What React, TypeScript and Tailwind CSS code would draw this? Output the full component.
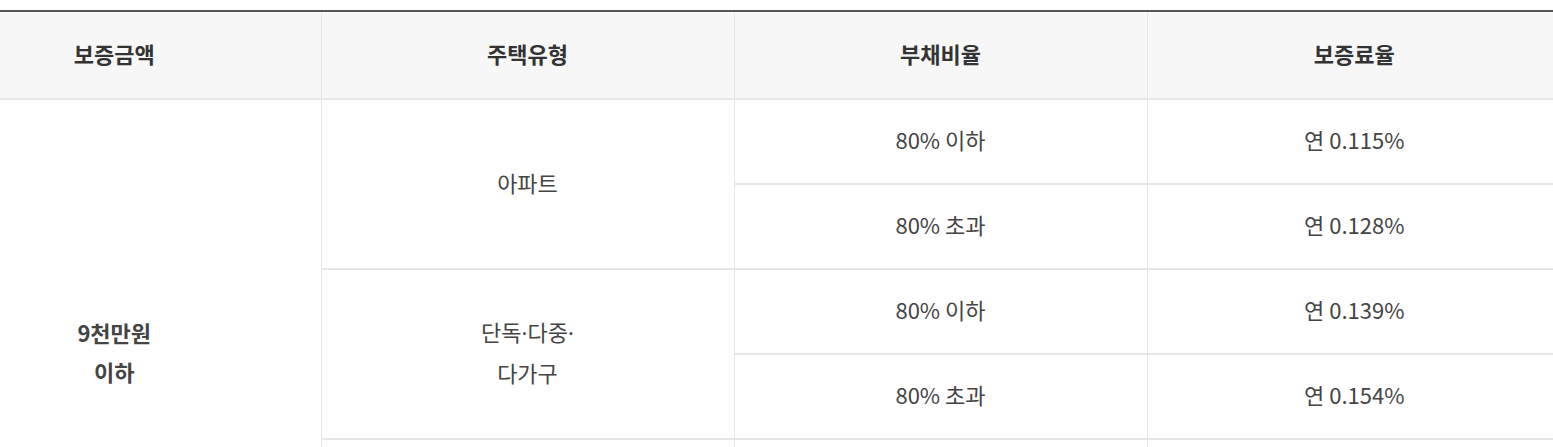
const rows = [
  { type: ["아파트"], ratio: "80% 이하", rate: "연 0.115%" },
  { ratio: "80% 초과", rate: "연 0.128%" },
  { type: ["단독", "다중", ""], type2: "다가구", ratio: "80% 이하", rate: "연 0.139%" },
  { ratio: "80% 초과", rate: "연 0.154%" },
  { type: ["연립", "다세대"], ratio: "80% 이하", rate: "연 0.128%" },
  { ratio: "80% 초과", rate: "연 0.142%" },
];

const cell = "border-l border-b-2 border-[#e6e6e6] pb-[5px] text-center align-middle";
const dot = <span className="font-['Noto_Sans',sans-serif]">·</span>;

export default function App() {
  return (
    <div className="w-[1553px] overflow-hidden bg-white pt-[10px] font-['Noto_Sans_CJK_KR',sans-serif]">
      <table className="ml-[-92px] w-[1653px] table-fixed border-collapse border-t-2 border-t-[#555]">
        <colgroup>
          <col className="w-[413px]" />
          <col className="w-[413px]" />
          <col className="w-[413px]" />
          <col className="w-[414px]" />
        </colgroup>
        <thead>
          <tr className="h-[88px] bg-[#f7f7f7] text-[22px] font-bold text-[#333]">
            <th className="border-b-2 border-[#e6e6e6] pb-[3px]">보증금액</th>
            <th className={cell.replace("pb-[5px]", "pb-[3px]")}>주택유형</th>
            <th className="border-l border-b-2 border-[#e6e6e6] pb-[3px] text-center align-middle">부채비율</th>
            <th className="border-l border-b-2 border-[#e6e6e6] pb-[3px] text-center align-middle">보증료율</th>
          </tr>
        </thead>
        <tbody className="text-[22px] leading-[40px] text-[#444]">
          {rows.map((r, i) => (
            <tr key={i} className="h-[85px]">
              {i === 0 && (
                <td rowSpan={6} className="border-b-2 border-[#e6e6e6] pb-[5px] text-center align-middle font-bold leading-[39px] text-[#444]">
                  9천만원
                  <br />
                  이하
                </td>
              )}
              {r.type && (
                <td rowSpan={2} className={cell}>
                  <div>
                    {r.type.map((t, j) => (
                      <span key={j}>
                        {j > 0 && dot}
                        {t}
                      </span>
                    ))}
                  </div>
                  {r.type2 && <div>{r.type2}</div>}
                </td>
              )}
              <td className={cell}>{r.ratio}</td>
              <td className={cell}>{r.rate}</td>
            </tr>
          ))}
        </tbody>
      </table>
    </div>
  );
}
